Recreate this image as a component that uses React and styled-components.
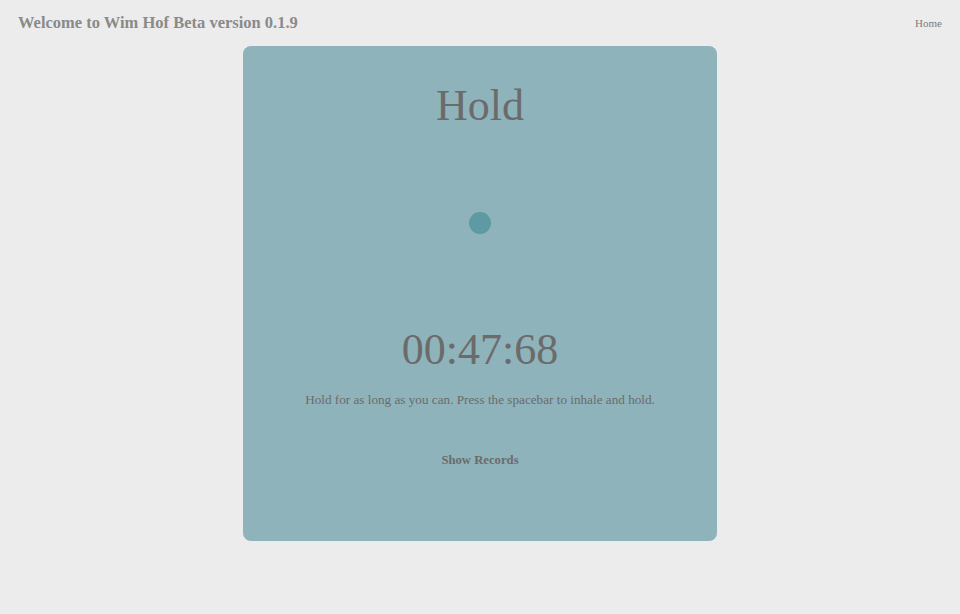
import React from "react";
import styled, { createGlobalStyle } from "styled-components";

const GlobalStyle = createGlobalStyle`
  html, body {
    margin: 0;
    padding: 0;
    background: #ececec;
    font-family: "Liberation Serif", "Times New Roman", serif;
  }
`;

const Page = styled.div`
  width: 960px;
  height: 614px;
  display: flex;
  flex-direction: column;
  align-items: center;
`;

const Header = styled.header`
  width: 100%;
  height: 46px;
  box-sizing: border-box;
  padding: 0 18px;
  display: flex;
  justify-content: space-between;
  align-items: center;
`;

const Title = styled.h1`
  margin: 0;
  font-size: 16.5px;
  font-weight: bold;
  color: #8a8a8a;
`;

const NavLink = styled.a`
  font-size: 11px;
  color: #7d7d7d;
  text-decoration: none;
`;

const Card = styled.main`
  width: 474px;
  height: 495px;
  background: #8fb3ba;
  border-radius: 8px;
  display: flex;
  flex-direction: column;
  align-items: center;
  color: #6b6b6b;
`;

const Phase = styled.h2`
  margin: 32px 0 0;
  font-size: 44px;
  font-weight: normal;
  line-height: 56px;
`;

const Dot = styled.div`
  width: 22px;
  height: 22px;
  border-radius: 50%;
  background: #5e9aa3;
  margin-top: 78px;
`;

const Timer = styled.div`
  margin-top: 91px;
  font-size: 44px;
  line-height: 50px;
`;

const Hint = styled.p`
  margin: 16px 0 0;
  font-size: 13.2px;
  line-height: 18px;
`;

const RecordsButton = styled.button`
  margin-top: 44px;
  border: none;
  background: none;
  padding: 0;
  font-family: inherit;
  font-size: 12.7px;
  font-weight: bold;
  color: #6b6b6b;
  cursor: pointer;
`;

export default function App() {
  return (
    <>
      <GlobalStyle />
      <Page>
        <Header>
          <Title>Welcome to Wim Hof Beta version 0.1.9</Title>
          <NavLink href="#">Home</NavLink>
        </Header>
        <Card>
          <Phase>Hold</Phase>
          <Dot />
          <Timer>00:47:68</Timer>
          <Hint>Hold for as long as you can. Press the spacebar to inhale and hold.</Hint>
          <RecordsButton>Show Records</RecordsButton>
        </Card>
      </Page>
    </>
  );
}
